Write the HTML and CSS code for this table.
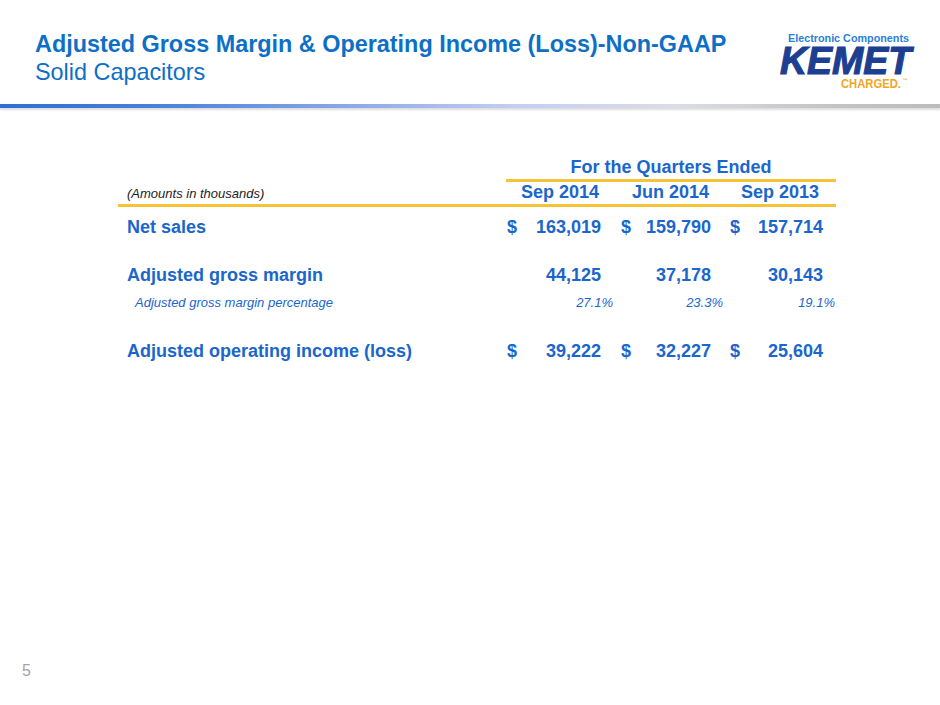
FILE: index.html
```html
<!DOCTYPE html>
<html>
<head>
<meta charset="utf-8">
<link rel="stylesheet" href="styles.css">
</head>
<body>
<div class="slide">
  <header class="header">
    <div class="titles">
      <h1 class="title">Adjusted Gross Margin &amp; Operating Income (Loss)-Non-GAAP</h1>
      <h2 class="subtitle">Solid Capacitors</h2>
    </div>
    <svg class="logo" width="140" height="66" viewBox="0 0 140 66" xmlns="http://www.w3.org/2000/svg">
      <text x="13" y="13.5" font-family="Liberation Sans, Arial, sans-serif" font-weight="700" font-size="10.5" fill="#2b80d8" textLength="121" lengthAdjust="spacingAndGlyphs">Electronic Components</text>
      <text x="5" y="46" font-family="Liberation Sans, Arial, sans-serif" font-weight="700" font-style="italic" font-size="39" fill="#1d3f92" stroke="#1d3f92" stroke-width="1.2" textLength="131" lengthAdjust="spacingAndGlyphs">KEMET</text>
      <text x="66" y="60" font-family="Liberation Sans, Arial, sans-serif" font-weight="700" font-size="13.5" fill="#f3a51e" textLength="60" lengthAdjust="spacingAndGlyphs">CHARGED.</text>
      <text x="127.5" y="53.5" font-family="Liberation Sans, Arial, sans-serif" font-weight="700" font-size="5" fill="#f3a51e">™</text>
    </svg>
  </header>
  <div class="rule"></div>

  <section class="table">
    <div class="group-head">For the Quarters Ended</div>
    <div class="row head-row">
      <div class="note">(Amounts in thousands)</div>
      <div class="hcell">Sep 2014</div>
      <div class="hcell">Jun 2014</div>
      <div class="hcell">Sep 2013</div>
    </div>
    <div class="row main first">
      <div class="label">Net sales</div>
      <div class="cell"><span>$</span><span>163,019</span></div>
      <div class="cell c2"><span>$</span><span>159,790</span></div>
      <div class="cell c3"><span>$</span><span>157,714</span></div>
    </div>
    <div class="row main gm">
      <div class="label">Adjusted gross margin</div>
      <div class="num">44,125</div>
      <div class="num c2">37,178</div>
      <div class="num c3">30,143</div>
    </div>
    <div class="row pct">
      <div class="plabel">Adjusted gross margin percentage</div>
      <div class="pcell">27.1%</div>
      <div class="pcell">23.3%</div>
      <div class="pcell last">19.1%</div>
    </div>
    <div class="row main oi">
      <div class="label">Adjusted operating income (loss)</div>
      <div class="cell"><span>$</span><span>39,222</span></div>
      <div class="cell c2"><span>$</span><span>32,227</span></div>
      <div class="cell c3"><span>$</span><span>25,604</span></div>
    </div>
  </section>

  <footer class="footer">5</footer>
</div>
</body>
</html>
```

FILE: styles.css
```css
html, body {
  margin: 0;
  padding: 0;
  background: #ffffff;
}

.slide {
  width: 940px;
  height: 705px;
  display: flex;
  flex-direction: column;
  font-family: "Liberation Sans", Arial, Helvetica, sans-serif;
  overflow: hidden;
}

.header {
  display: flex;
  justify-content: space-between;
  align-items: flex-start;
  padding: 30px 25px 0 35px;
  height: 56px;
}

.title,
.subtitle {
  margin: 0;
  font-size: 23.4px;
  line-height: 28px;
  color: #0d6fc6;
  white-space: nowrap;
}

.title {
  font-weight: 700;
}

.subtitle {
  font-weight: 400;
}

.logo {
  display: block;
  margin-top: -2px;
}

.rule {
  margin-top: 18px;
  height: 4px;
  background: linear-gradient(90deg, #2c6ed2 0%, #4b84da 18%, #8eaae8 38%, #c6cdf3 55%, #dcdce6 72%, #c4c4c4 88%, #bcbcbc 100%);
  box-shadow: 0 2px 2px rgba(120, 120, 120, 0.25);
}

.table {
  margin-left: 118px;
  width: 718px;
  margin-top: 48px;
  color: #1a66cc;
}

.group-head {
  margin-left: 388px;
  width: 330px;
  text-align: center;
  font-weight: 700;
  font-size: 18px;
  line-height: 22px;
  padding-bottom: 1px;
  border-bottom: 3px solid #f6c236;
}

.row {
  display: grid;
  grid-template-columns: 388px 110px 110px 110px;
  align-items: baseline;
}

.head-row {
  line-height: 21px;
  border-bottom: 3px solid #f6c236;
}

.note {
  padding-left: 9px;
  font-style: italic;
  font-size: 13px;
  color: #222222;
}

.hcell {
  text-align: right;
  padding-right: 17px;
  font-weight: 700;
  font-size: 18px;
}

.main {
  font-weight: 700;
  font-size: 18px;
  line-height: 22px;
}

.main.first {
  margin-top: 9px;
}

.main.gm {
  margin-top: 26px;
}

.main.oi {
  margin-top: 29px;
}

.label {
  padding-left: 9px;
  white-space: nowrap;
}

.cell {
  display: flex;
  justify-content: space-between;
  align-items: baseline;
  padding-left: 1px;
  padding-right: 15px;
}

.num {
  text-align: right;
  padding-right: 15px;
}

.cell.c2 {
  padding-left: 5px;
  padding-right: 15px;
}

.cell.c3,
.num.c3 {
  padding-left: 4px;
  padding-right: 13px;
}

.pct {
  margin-top: 9px;
  font-style: italic;
  font-size: 13px;
  line-height: 16px;
}

.plabel {
  padding-left: 17px;
  white-space: nowrap;
}

.pcell {
  text-align: right;
  padding-right: 3px;
}

.pcell.last {
  padding-right: 1px;
}

.footer {
  margin-top: auto;
  padding: 0 0 24px 22px;
  font-size: 16px;
  line-height: 20px;
  color: #a3a3a3;
}
```
